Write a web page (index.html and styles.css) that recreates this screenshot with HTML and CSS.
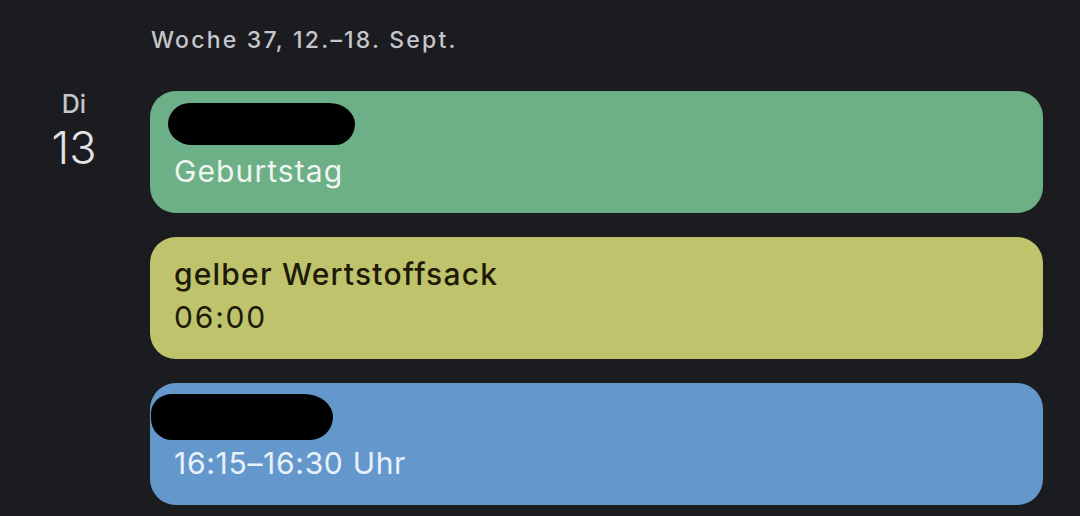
FILE: index.html
```html
<!DOCTYPE html>
<html lang="de">
<head>
<meta charset="utf-8">
<title>Woche 37</title>
<link rel="stylesheet" href="styles.css">
</head>
<body>
<div class="page">
  <div class="week">Woche 37, 12.–18. Sept.</div>
  <div class="day">
    <div class="date">
      <div class="dow">Di</div>
      <div class="num">13</div>
    </div>
    <div class="events">
      <div class="event green">
        <div class="line redact-line"><span class="blob blob1"></span></div>
        <div class="line">Geburtstag</div>
      </div>
      <div class="event yellow">
        <div class="line title">gelber Wertstoffsack</div>
        <div class="line digits">06:00</div>
      </div>
      <div class="event blue">
        <div class="line redact-line"><span class="blob blob3"></span></div>
        <div class="line range">16:15–16:30 Uhr</div>
      </div>
    </div>
  </div>
</div>
</body>
</html>
```

FILE: styles.css
```css
html, body {
  margin: 0;
  padding: 0;
  background: #1b1c1f;
}
body {
  font-family: Inter, "Open Sans", Roboto, sans-serif;
  width: 1080px;
  height: 516px;
  overflow: hidden;
}
.page {
  padding-top: 25px;
}
.week {
  padding-left: 151px;
  color: #c5c6cc;
  font-size: 23px;
  font-weight: 500;
  letter-spacing: 2.2px;
  line-height: 30px;
  height: 30px;
}
.day {
  display: grid;
  grid-template-columns: 150px 893px;
  margin-top: 36px;
}
.date {
  display: flex;
  flex-direction: column;
  align-items: center;
  padding-right: 2px;
  color: #e3e3e6;
}
.dow {
  font-size: 25px;
  font-weight: 500;
  color: #c5c6cc;
  line-height: 30px;
  margin-top: -2px;
}
.num {
  font-size: 45px;
  font-weight: 300;
  line-height: 50px;
  margin-top: 4px;
}
.events {
  display: flex;
  flex-direction: column;
  gap: 24px;
}
.event {
  height: 122px;
  border-radius: 26px;
  box-sizing: border-box;
  padding: 16px 24px 0 24px;
  font-size: 30px;
  letter-spacing: 1.1px;
  line-height: 43px;
}
.line {
  height: 43px;
  white-space: nowrap;
}
.title {
  font-weight: 500;
  letter-spacing: 1.2px;
}
.digits {
  letter-spacing: 1.8px;
}
.range {
  letter-spacing: 0.7px;
}
.green { background: #6daf86; color: #eef6ef; }
.yellow { background: #bfc36c; color: #1d1b08; }
.blue { background: #6498cc; color: #e9f1fb; }
.redact-line {
  position: relative;
}
.blob {
  position: absolute;
  background: #000;
  display: block;
}
.blob1 {
  left: -6px;
  top: -4px;
  width: 187px;
  height: 42px;
  border-radius: 22px 26px 20px 24px / 21px 21px 21px 21px;
}
.blob3 {
  left: -23px;
  top: -5px;
  width: 182px;
  height: 46px;
  border-radius: 22px 30px 24px 22px / 20px 24px 24px 22px;
}
```
